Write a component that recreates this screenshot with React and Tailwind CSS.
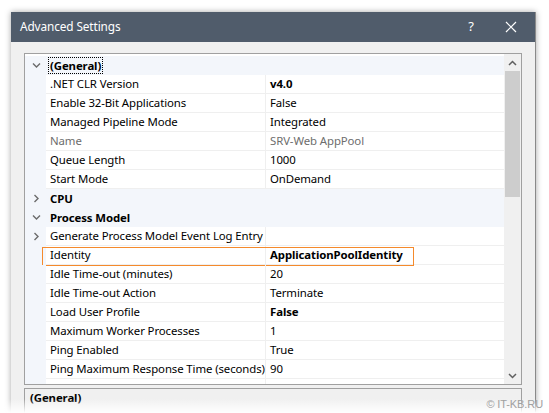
import React from 'react';

const font = { fontFamily: '"Noto Sans", "Open Sans", sans-serif' };

function Chevron({ dir }) {
  // small thin chevron used in the property grid margin
  const d = dir === 'down' ? 'M1 2.5 L4.5 6 L8 2.5' : 'M2.5 1 L6 4.5 L2.5 8';
  return (
    <svg width="9" height="9" viewBox="0 0 9 9" className="block">
      <path d={d} fill="none" stroke="#6b6b6b" strokeWidth="1.4" />
    </svg>
  );
}

const rows = [
  { type: 'cat', label: '(General)', open: true, focus: true },
  { label: '.NET CLR Version', value: 'v4.0', bold: true },
  { label: 'Enable 32-Bit Applications', value: 'False' },
  { label: 'Managed Pipeline Mode', value: 'Integrated' },
  { label: 'Name', value: 'SRV-Web AppPool', muted: true },
  { label: 'Queue Length', value: '1000' },
  { label: 'Start Mode', value: 'OnDemand' },
  { type: 'cat', label: 'CPU', open: false },
  { type: 'cat', label: 'Process Model', open: true },
  { label: 'Generate Process Model Event Log Entry', value: '', expand: true },
  { label: 'Identity', value: 'ApplicationPoolIdentity', bold: true, mark: true },
  { label: 'Idle Time-out (minutes)', value: '20' },
  { label: 'Idle Time-out Action', value: 'Terminate' },
  { label: 'Load User Profile', value: 'False', bold: true },
  { label: 'Maximum Worker Processes', value: '1' },
  { label: 'Ping Enabled', value: 'True' },
  { label: 'Ping Maximum Response Time (seconds)', value: '90' },
  { label: 'Ping Period (seconds)', value: '30' },
];

function Row({ row }) {
  if (row.type === 'cat') {
    return (
      <div className="flex h-[19px] shrink-0 bg-[#f3f6fb] items-center">
        <div className="w-[21px] flex justify-center pl-[2px]">
          <Chevron dir={row.open ? 'down' : 'right'} />
        </div>
        <div className="flex-1 pl-[3px]">
          <span
            className={
              'font-bold text-black px-[1px] ' +
              (row.focus ? 'outline outline-1 outline-dotted outline-black' : '')
            }
          >
            {row.label}
          </span>
        </div>
      </div>
    );
  }
  return (
    <div className="relative flex h-[19px] shrink-0">
      <div className="w-[21px] bg-[#f3f6fb] flex items-center justify-center pl-[2px]">
        {row.expand && <Chevron dir="right" />}
      </div>
      <div
        className={
          'w-[220px] border-b border-r border-[#efefef] pl-[4px] flex items-center whitespace-nowrap overflow-hidden ' +
          (row.muted ? 'text-[#6d6d6d]' : 'text-black')
        }
      >
        {row.label}
      </div>
      <div
        className={
          'flex-1 border-b border-[#efefef] pl-[4px] flex items-center ' +
          (row.muted ? 'text-[#6d6d6d] ' : 'text-black ') +
          (row.bold ? 'font-bold' : '')
        }
      >
        {row.value}
      </div>
      {row.mark && (
        <div className="absolute left-[17px] top-[1px] w-[372px] h-[19px] border border-[#f58a2c]" />
      )}
    </div>
  );
}

export default function App() {
  return (
    <div className="relative w-[549px] h-[413px] bg-white overflow-hidden text-[11.4px] tracking-[-0.1px]" style={font}>
      <div className="ml-[11px] mt-[12px] w-[525px] h-[420px] bg-[#f0f0f0] border-r border-[#8a8a8a] shadow-[0_0_6px_rgba(0,0,0,0.35)]">
        <div className="h-[30px] bg-[#505c6b] flex items-center text-white">
          <span className="ml-[9px] flex-1 text-[11.8px]">Advanced Settings</span>
          <span className="w-[20px] text-center mr-[24px] text-[13px]">?</span>
          <svg width="12" height="12" viewBox="0 0 12 12" className="mr-[18px]">
            <path d="M1 1 L11 11 M11 1 L1 11" stroke="white" strokeWidth="1.2" />
          </svg>
        </div>
        <div className="pt-[11px] pl-[13px] pr-[13px]">
          <div className="h-[332px] border border-[#a0a0a0] bg-white flex overflow-hidden">
            <div className="flex-1 flex flex-col overflow-hidden pt-[2px]">
              {rows.map((r, i) => (
                <Row key={i} row={r} />
              ))}
            </div>
            <div className="w-[17px] bg-[#f0f0f0] flex flex-col items-center">
              <div className="h-[17px] flex items-center justify-center">
                <svg width="9" height="6" viewBox="0 0 9 6">
                  <path d="M1 5 L4.5 1.5 L8 5" fill="none" stroke="#606060" strokeWidth="1.5" />
                </svg>
              </div>
              <div className="w-[15px] h-[126px] bg-[#cdcdcd]" />
              <div className="flex-1" />
              <div className="h-[17px] flex items-center justify-center">
                <svg width="9" height="6" viewBox="0 0 9 6">
                  <path d="M1 1 L4.5 4.5 L8 1" fill="none" stroke="#606060" strokeWidth="1.5" />
                </svg>
              </div>
            </div>
          </div>
          <div className="mt-[3px] h-[40px] border border-[#a0a0a0] bg-[#f0f0f0] pl-[5px]">
            <span className="font-bold text-black">(General)</span>
          </div>
        </div>
      </div>
      {/* torn-edge fade at the bottom of the screenshot */}
      <div className="absolute left-0 right-0 bottom-0 h-[14px] bg-gradient-to-b from-white/0 to-white" />
      <div className="absolute right-[6px] bottom-[1px] text-[11px] text-[#a0a0a0]" style={{ fontFamily: '"Liberation Sans", Arial, sans-serif' }}>
        © IT-KB.RU
      </div>
    </div>
  );
}
